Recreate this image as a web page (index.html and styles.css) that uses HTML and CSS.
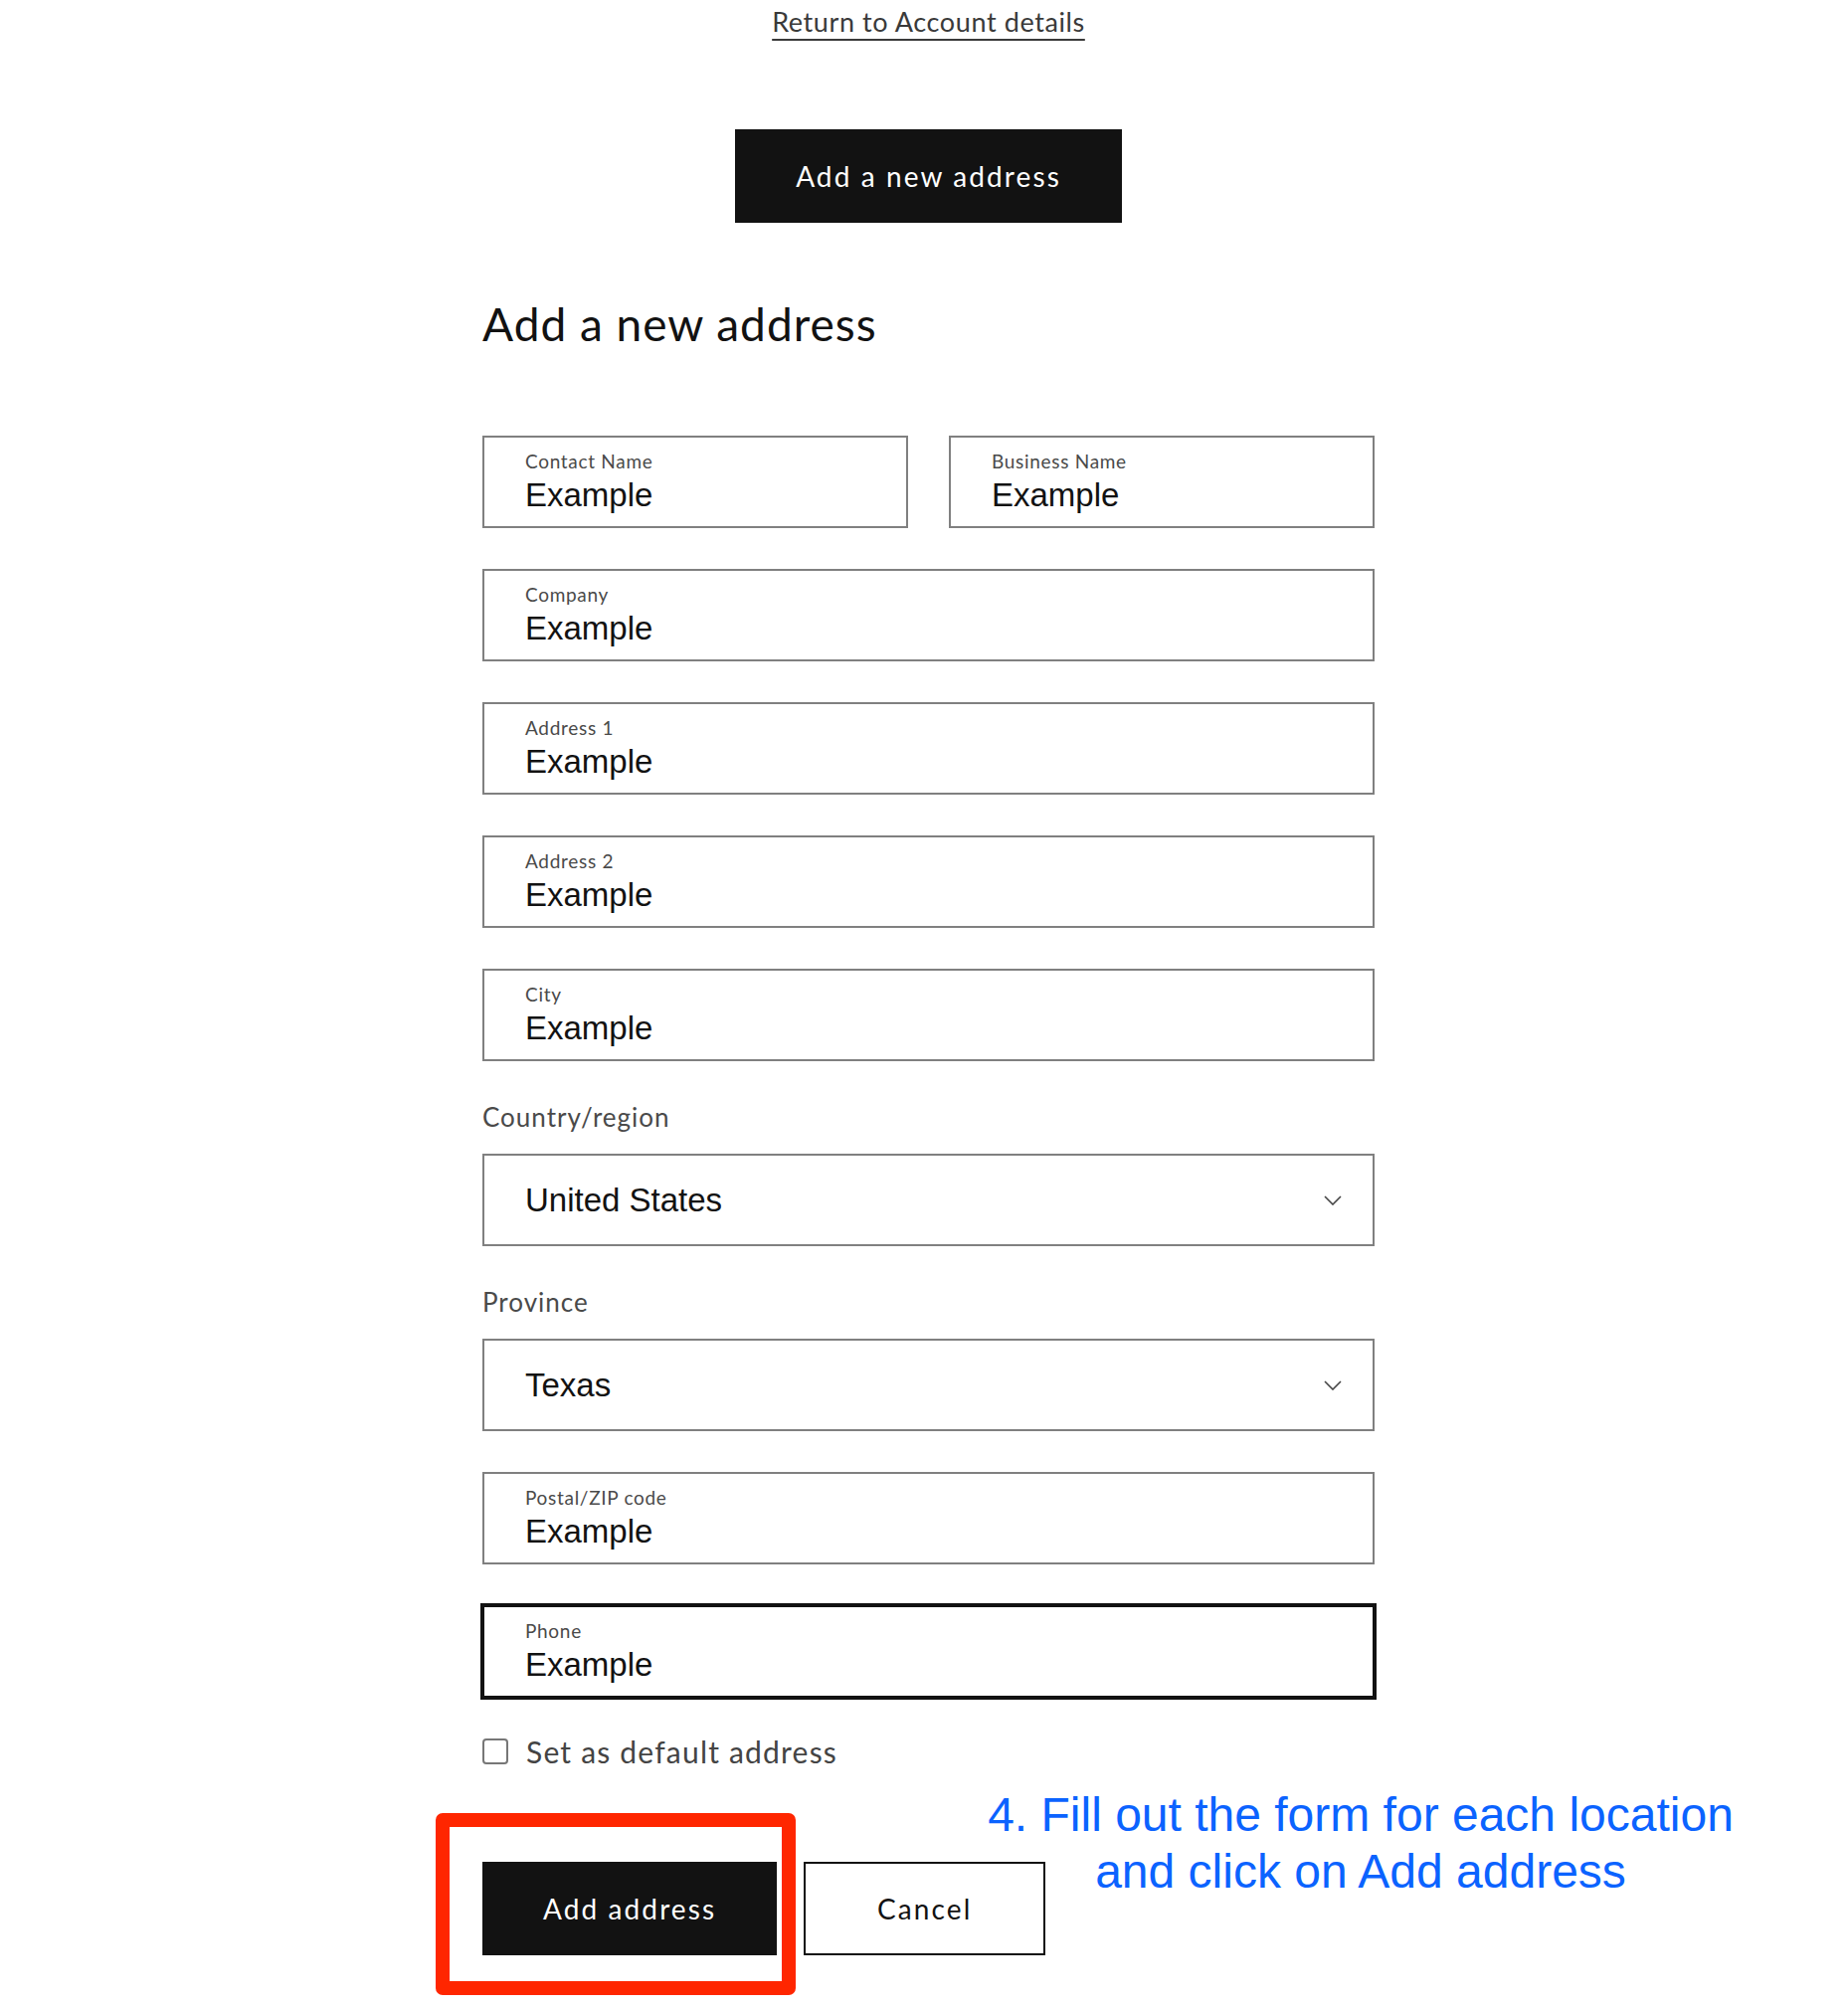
FILE: index.html
```html
<!DOCTYPE html>
<html lang="en">
<head>
    <meta charset="UTF-8">
    <meta name="viewport" content="width=device-width, initial-scale=1.0">
    <title>Add a new address</title>
    <link rel="stylesheet" href="styles.css">
</head>
<body>
    <div class="page">
        <div class="top">
            <a class="return-link" href="#">Return to Account details</a>
            <div><button class="btn btn-primary" type="button">Add a new address</button></div>
        </div>

        <form class="address-form">
            <h2 class="form-title">Add a new address</h2>

            <div class="field-row">
                <div class="field">
                    <label for="contact">Contact Name</label>
                    <input id="contact" type="text" value="Example">
                </div>
                <div class="field">
                    <label for="business">Business Name</label>
                    <input id="business" type="text" value="Example">
                </div>
            </div>

            <div class="field">
                <label for="company">Company</label>
                <input id="company" type="text" value="Example">
            </div>

            <div class="field">
                <label for="address1">Address 1</label>
                <input id="address1" type="text" value="Example">
            </div>

            <div class="field">
                <label for="address2">Address 2</label>
                <input id="address2" type="text" value="Example">
            </div>

            <div class="field">
                <label for="city">City</label>
                <input id="city" type="text" value="Example">
            </div>

            <div class="select-group">
                <label for="country">Country/region</label>
                <div class="select-wrap">
                    <select id="country">
                        <option>United States</option>
                    </select>
                    <svg class="chevron" viewBox="0 0 18 10" width="18" height="10" aria-hidden="true">
                        <path d="M1 1l8 8 8-8" fill="none" stroke="#444" stroke-width="1.6"/>
                    </svg>
                </div>
            </div>

            <div class="select-group">
                <label for="province">Province</label>
                <div class="select-wrap">
                    <select id="province">
                        <option>Texas</option>
                    </select>
                    <svg class="chevron" viewBox="0 0 18 10" width="18" height="10" aria-hidden="true">
                        <path d="M1 1l8 8 8-8" fill="none" stroke="#444" stroke-width="1.6"/>
                    </svg>
                </div>
            </div>

            <div class="field">
                <label for="zip">Postal/ZIP code</label>
                <input id="zip" type="text" value="Example">
            </div>

            <div class="field field-focus">
                <label for="phone">Phone</label>
                <input id="phone" type="text" value="Example">
            </div>

            <div class="checkbox-row">
                <input id="default" type="checkbox">
                <label for="default">Set as default address</label>
            </div>

            <div class="actions">
                <button class="btn btn-primary" type="button">Add address</button>
                <button class="btn btn-secondary" type="button">Cancel</button>
            </div>
        </form>

        <!-- screenshot annotations -->
        <div class="highlight-box"></div>
        <p class="annotation">4. Fill out the form for each location<br>and click on Add address</p>
    </div>
</body>
</html>
```

FILE: styles.css
```css
body {
    margin: 0;
    padding: 0;
    background: #fff;
    color: #121212;
    font-family: Lato, "Open Sans", sans-serif;
}

.page {
    position: relative;
    width: 897px;
    margin-left: 485px;
    height: 2019px;
}

.top {
    text-align: center;
    padding-top: 4px;
}

.return-link {
    display: inline-block;
    font-size: 27px;
    line-height: 36px;
    letter-spacing: 0.6px;
    color: #3a3a3a;
    text-decoration: underline;
    text-decoration-thickness: 2px;
    text-underline-offset: 7px;
}

.btn {
    height: 94px;
    min-width: 243px;
    padding: 0 61px;
    border: none;
    border-radius: 0;
    font-family: Lato, "Open Sans", sans-serif;
    font-size: 28px;
    letter-spacing: 2.1px;
    cursor: pointer;
}

.btn-primary {
    background: #121212;
    color: #fff;
}

.btn-secondary {
    background: #fff;
    color: #121212;
    border: 2px solid #121212;
}

.top .btn {
    margin-top: 90px;
}

.form-title {
    margin: 76px 0 86px;
    font-size: 46px;
    line-height: 52px;
    font-weight: 400;
    letter-spacing: 1px;
    color: #121212;
}

.field-row {
    display: grid;
    grid-template-columns: minmax(0, 1fr) minmax(0, 1fr);
    gap: 41px;
}

.field {
    box-sizing: border-box;
    min-width: 0;
    height: 93px;
    margin-bottom: 41px;
    padding: 14px 39px 0 41px;
    border: 2px solid #808080;
    display: flex;
    flex-direction: column;
    gap: 4px;
}

.field label {
    font-size: 19px;
    line-height: 20px;
    letter-spacing: 0.7px;
    color: #4a4a4a;
}

.field input {
    width: 100%;
    min-width: 0;
    height: 40px;
    padding: 0;
    margin: 0;
    border: none;
    outline: none;
    background: transparent;
    font-family: "Liberation Sans", Arial, sans-serif;
    font-size: 33px;
    line-height: 40px;
    color: #121212;
}

.field-focus {
    border-color: #121212;
    box-shadow: 0 0 0 2px #121212;
}

.select-group {
    margin-bottom: 41px;
}

.select-group > label {
    display: block;
    margin-bottom: 22px;
    font-size: 26px;
    line-height: 30px;
    letter-spacing: 1px;
    color: #4a4a4a;
}

.select-wrap {
    position: relative;
}

.select-wrap select {
    box-sizing: border-box;
    width: 100%;
    height: 93px;
    padding: 0 39px 0 41px;
    border: 2px solid #808080;
    border-radius: 0;
    background: #fff;
    appearance: none;
    -webkit-appearance: none;
    font-family: "Liberation Sans", Arial, sans-serif;
    font-size: 33px;
    color: #121212;
}

.chevron {
    position: absolute;
    right: 33px;
    top: 42px;
}

.checkbox-row {
    display: flex;
    align-items: center;
    gap: 18px;
    height: 26px;
}

.checkbox-row input {
    appearance: none;
    -webkit-appearance: none;
    box-sizing: border-box;
    width: 26px;
    height: 26px;
    margin: 0;
    border: 2px solid #777;
    border-radius: 4px;
    background: #fff;
}

.checkbox-row label {
    font-size: 30px;
    line-height: 26px;
    letter-spacing: 1.2px;
    color: #444;
}

.actions {
    display: flex;
    gap: 27px;
    margin-top: 98px;
}

.highlight-box {
    position: absolute;
    left: -47px;
    top: 1823px;
    width: 362px;
    height: 183px;
    box-sizing: border-box;
    border: 14px solid #ff2600;
    border-radius: 7px;
}

.annotation {
    position: absolute;
    left: 483px;
    top: 1796px;
    width: 800px;
    margin: 0;
    text-align: center;
    font-family: "Liberation Sans", Arial, sans-serif;
    font-size: 48px;
    line-height: 57px;
    color: #0b63ff;
}
```
